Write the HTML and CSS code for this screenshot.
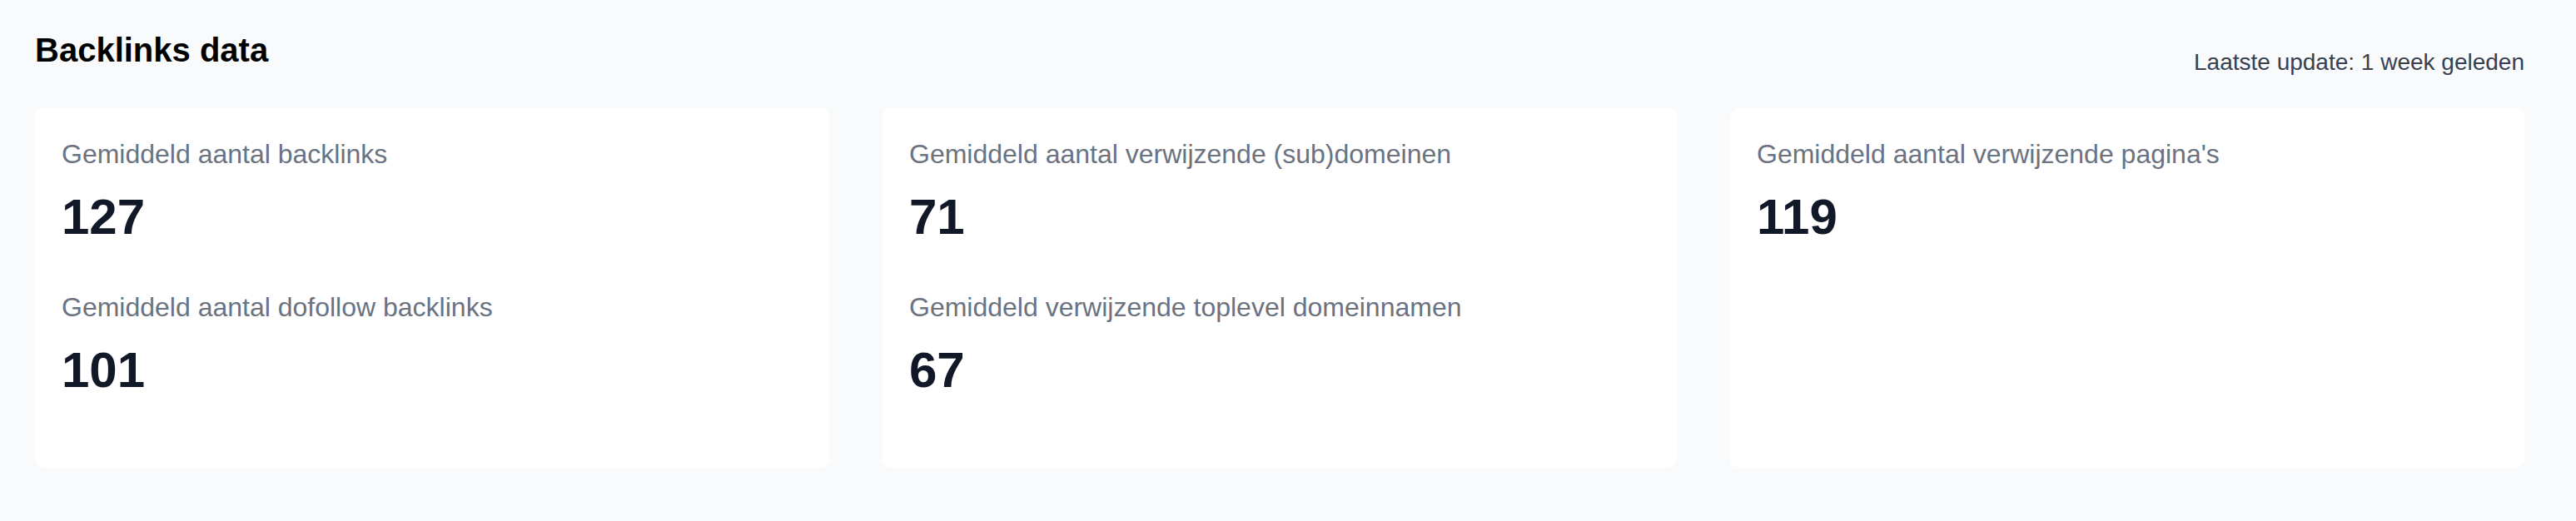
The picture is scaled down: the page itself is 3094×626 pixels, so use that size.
FILE: index.html
```html
<!DOCTYPE html>
<html lang="nl">
<head>
<meta charset="utf-8">
<title>Backlinks data</title>
<link rel="stylesheet" href="styles.css">
</head>
<body>
<main class="page">
  <header class="header">
    <h1 class="title">Backlinks data</h1>
    <p class="update">Laatste update: 1 week geleden</p>
  </header>
  <section class="grid">
    <div class="card">
      <div class="stat">
        <p class="label">Gemiddeld aantal backlinks</p>
        <p class="value">127</p>
      </div>
      <div class="stat">
        <p class="label">Gemiddeld aantal dofollow backlinks</p>
        <p class="value">101</p>
      </div>
    </div>
    <div class="card">
      <div class="stat">
        <p class="label">Gemiddeld aantal verwijzende (sub)domeinen</p>
        <p class="value">71</p>
      </div>
      <div class="stat">
        <p class="label">Gemiddeld verwijzende toplevel domeinnamen</p>
        <p class="value">67</p>
      </div>
    </div>
    <div class="card">
      <div class="stat">
        <p class="label">Gemiddeld aantal verwijzende pagina's</p>
        <p class="value">119</p>
      </div>
    </div>
  </section>
</main>
</body>
</html>
```
FILE: styles.css
```css
html, body {
  margin: 0;
  padding: 0;
  background: #f9fafb;
}
body {
  font-family: "Liberation Sans", Arial, Helvetica, sans-serif;
  width: 3094px;
  height: 626px;
  overflow: hidden;
}
.page {
  padding: 32px 62px 0 42px;
}
.header {
  display: flex;
  justify-content: space-between;
  align-items: flex-start;
  margin-bottom: 35px;
}
.title {
  margin: 0;
  font-size: 40px;
  line-height: 56px;
  font-weight: 700;
  color: #000000;
}
.update {
  margin: 23px 0 0 0;
  font-size: 28px;
  line-height: 40px;
  color: #374151;
}
.grid {
  display: grid;
  grid-template-columns: repeat(3, 1fr);
  gap: 64px;
}
.card {
  background: #ffffff;
  border-radius: 10px;
  padding: 31px 32px 33px 32px;
}
.stat {
  margin-bottom: 48px;
}
.label {
  margin: 0;
  font-size: 32px;
  line-height: 48px;
  color: #6b7280;
}
.value {
  margin: 16px 0 0 0;
  font-size: 60px;
  line-height: 72px;
  font-weight: 700;
  color: #111827;
}
```
